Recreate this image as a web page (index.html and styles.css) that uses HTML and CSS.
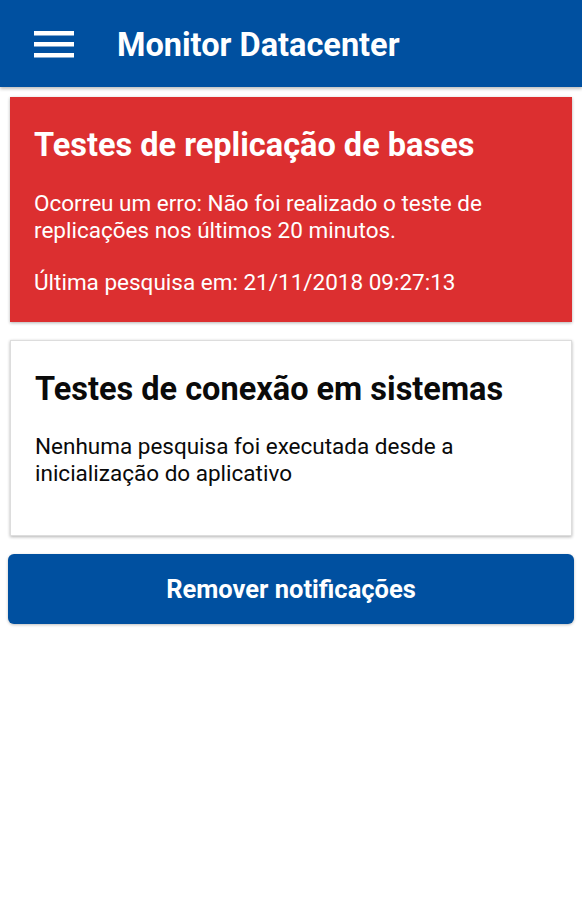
FILE: index.html
```html
<!DOCTYPE html>
<html>
  <head>
    <meta charset="utf-8">
    <meta name="viewport" content="width=device-width, initial-scale=1.0">
    <title>Monitor Datacenter</title>
    <link rel="stylesheet" href="styles.css">
  </head>

  <body>
    <header class="app-bar">
      <!-- menu icon -->
      <svg class="menu-icon" width="40" height="27" viewBox="0 0 40 27">
        <rect x="0" y="0" width="40" height="4.5" fill="#FFFFFF"/>
        <rect x="0" y="11" width="40" height="4.5" fill="#FFFFFF"/>
        <rect x="0" y="22" width="40" height="4.5" fill="#FFFFFF"/>
      </svg>
      <h1>Monitor Datacenter</h1>
    </header>

    <main class="content">
      <section class="card card-error">
        <h2>Testes de replicação de bases</h2>
        <p>Ocorreu um erro: Não foi realizado o teste de replicações nos últimos 20 minutos.</p>
        <p>Última pesquisa em: 21/11/2018 09:27:13</p>
      </section>

      <section class="card card-ok">
        <h2>Testes de conexão em sistemas</h2>
        <p>Nenhuma pesquisa foi executada desde a inicialização do aplicativo</p>
      </section>

      <button class="clear-button">Remover notificações</button>
    </main>
  </body>
</html>
```

FILE: styles.css
```css
/* Reset / Global */
* {
  margin: 0;
  padding: 0;
  box-sizing: border-box;
}

body {
  font-family: Roboto, "Liberation Sans", sans-serif;
  background-color: #FFFFFF;
  color: #111111;
}

/* Header => blue app bar */
.app-bar {
  background-color: #0050A0;
  height: 87px;
  display: flex;
  align-items: center;
  padding-left: 34px;
  box-shadow: 0 2px 3px rgba(0, 0, 0, 0.25);
}
.menu-icon {
  margin-right: 43px;
  margin-top: 1px;
}
.app-bar h1 {
  color: #FFFFFF;
  font-size: 32.5px;
  font-weight: bold;
  margin-top: 2px;
}

/* Main => cards stacked */
.content {
  padding: 10px 8px;
  display: flex;
  flex-direction: column;
}

.card {
  margin: 0 2px 18px 2px;
  padding: 29px 24px 0 24px;
  box-shadow: 0 1px 3px rgba(0, 0, 0, 0.3);
}
.card h2 {
  font-size: 32.5px;
  font-weight: bold;
  line-height: 38px;
  margin-bottom: 26px;
}
.card p {
  font-size: 22.5px;
  line-height: 27px;
}

.card-error {
  background-color: #DC2F30;
  color: #FFFFFF;
  height: 225px;
}
.card-error p:first-of-type {
  margin-top: 1px;
}
.card-error p + p {
  margin-top: 25px;
}

.card-ok {
  background-color: #FFFFFF;
  color: #0A0A0A;
  height: 196px;
  border: 1px solid #DDDDDD;
}
.card-ok p {
  margin-top: -1px;
}

/* Button => full width blue */
.clear-button {
  border: none;
  border-radius: 6px;
  background-color: #0050A0;
  color: #FFFFFF;
  font-family: Roboto, "Liberation Sans", sans-serif;
  font-size: 25.5px;
  font-weight: bold;
  height: 70px;
  width: 100%;
  cursor: pointer;
  box-shadow: 0 1px 3px rgba(0, 0, 0, 0.25);
}
```
